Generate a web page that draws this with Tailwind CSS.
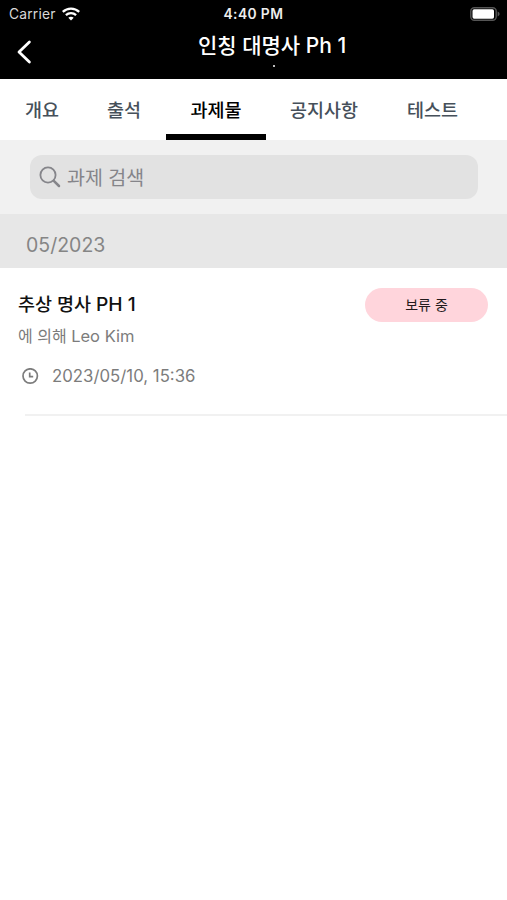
<!DOCTYPE html>
<html lang="ko">
<head>
<meta charset="utf-8">
<title>과제물</title>
<script src="https://cdn.jsdelivr.net/npm/@tailwindcss/browser@4"></script>
</head>
<body class="w-[507px] h-[900px] overflow-hidden bg-white font-['Inter','Noto_Sans_CJK_KR',sans-serif] whitespace-nowrap">
<header class="h-[79px] bg-black text-white">
  <div class="h-[27px] grid grid-cols-[1fr_62px_1fr] items-center pl-[9px] pr-[7px]">
    <div class="flex items-center gap-[6px] text-[13.8px] text-[#d8d8d8]">
      <span class="w-[47px] pt-px tracking-[0.2px]">Carrier</span>
      <svg class="w-[18px] h-[14px] text-white" viewBox="0 0 18 14" fill="none" stroke="currentColor" stroke-width="2.3"><path d="M.8 4.9C5.4.5 12.6.5 17.2 4.9M3.9 8.1c2.9-2.7 7.3-2.7 10.2 0"/><path d="M9 13.6 6.3 10.8c1.5-1.4 3.9-1.4 5.4 0Z" fill="currentColor" stroke="none"/></svg>
    </div>
    <div class="pt-px text-[13.8px] tracking-[0.4px] font-semibold text-[#ededed]">4:40 PM</div>
    <svg class="w-[30px] h-[14px] justify-self-end" viewBox="0 0 30 14"><rect x=".8" y=".8" width="25.4" height="12.4" rx="3.5" fill="none" stroke="#555" stroke-width="1.4"/><rect x="2.5" y="2.3" width="21.5" height="9.4" rx="1.6" fill="#fff"/><path d="M27.6 4.6c2.6 1.2 2.6 3.6 0 4.8Z" fill="#555"/></svg>
  </div>
  <div class="h-[50px] flex pl-[16px]">
    <svg class="w-[16px] h-[24px] mt-[13px]" viewBox="0 0 16 24" fill="none" stroke="#fff" stroke-width="2.8" stroke-linecap="round" stroke-linejoin="round"><path d="M13.4 2 3 12l10.4 10"/></svg>
    <div class="ml-[164px] w-[152px] flex flex-col items-center">
      <h1 class="h-[38px] leading-[38px] text-[21px] font-medium">인칭 대명사 Ph 1</h1>
      <span class="ml-[4px] size-[2px] bg-[#bbb]"></span>
    </div>
  </div>
</header>
<nav class="h-[61px] flex items-start pt-[16px] text-[18.5px] leading-[30px] font-medium text-[#46505a]">
  <a class="ml-[25px] w-[82px]">개요</a>
  <a class="w-[59px]">출석</a>
  <a class="w-[100px] h-[45px] border-b-[6px] border-black text-black text-center">과제물</a>
  <a class="ml-[24px] w-[117px]">공지사항</a>
  <a>테스트</a>
</nav>
<div class="h-[74px] bg-[#f1f1f1] pl-[30px] pt-[15px]">
  <div class="w-[448px] h-[44px] rounded-[12px] bg-[#e2e2e2] flex items-center pl-[9px] text-[#85858a]">
    <svg class="w-[22px] h-[22px]" viewBox="0 0 22 22" fill="none" stroke="currentColor" stroke-width="1.8" stroke-linecap="round"><circle cx="9" cy="9" r="7.6"/><path d="m14.8 14.8 5.2 5.2" stroke-width="2.5"/></svg>
    <span class="ml-[6px] pt-[3px] text-[19.5px]">과제 검색</span>
  </div>
</div>
<h2 class="h-[54px] bg-[#e7e7e7] pl-[26px] pt-[4px] leading-[54px] text-[19.5px] text-[#858585]">05/2023</h2>
<article class="h-[146px] pl-[18px] pr-[19px] flex justify-between items-start">
  <div>
    <h3 class="mt-[22px] h-[28px] leading-[29px] text-[18.5px] font-medium text-[#111]">추상 명사 <span class="text-[19.2px]">PH 1</span></h3>
    <p class="mt-[5px] h-[26px] leading-[26px] text-[16px] text-[#7c7c7c]">에 의해 <span class="text-[16.5px]">Leo Kim</span></p>
    <div class="mt-[14px] h-[26px] flex items-center text-[16.8px] text-[#7c7c7c]">
      <svg class="ml-[4px] w-[17px] h-[17px]" viewBox="0 0 17 17" fill="none" stroke="currentColor" stroke-width="1.7"><circle cx="8.2" cy="8" r="7.2"/><path d="M7.7 4.5v4.2h3.5"/></svg>
      <span class="ml-[13px] pt-[2px]">2023/05/10, 15:36</span>
    </div>
  </div>
  <span class="mt-[20px] w-[123px] h-[34px] rounded-full bg-[#ffd5dc] text-center leading-[34px] text-[14px] text-[#231a1c]">보류 중</span>
</article>
<hr class="ml-[25px] border-0 h-[2px] bg-[#f1f1f1]">
</body>
</html>
